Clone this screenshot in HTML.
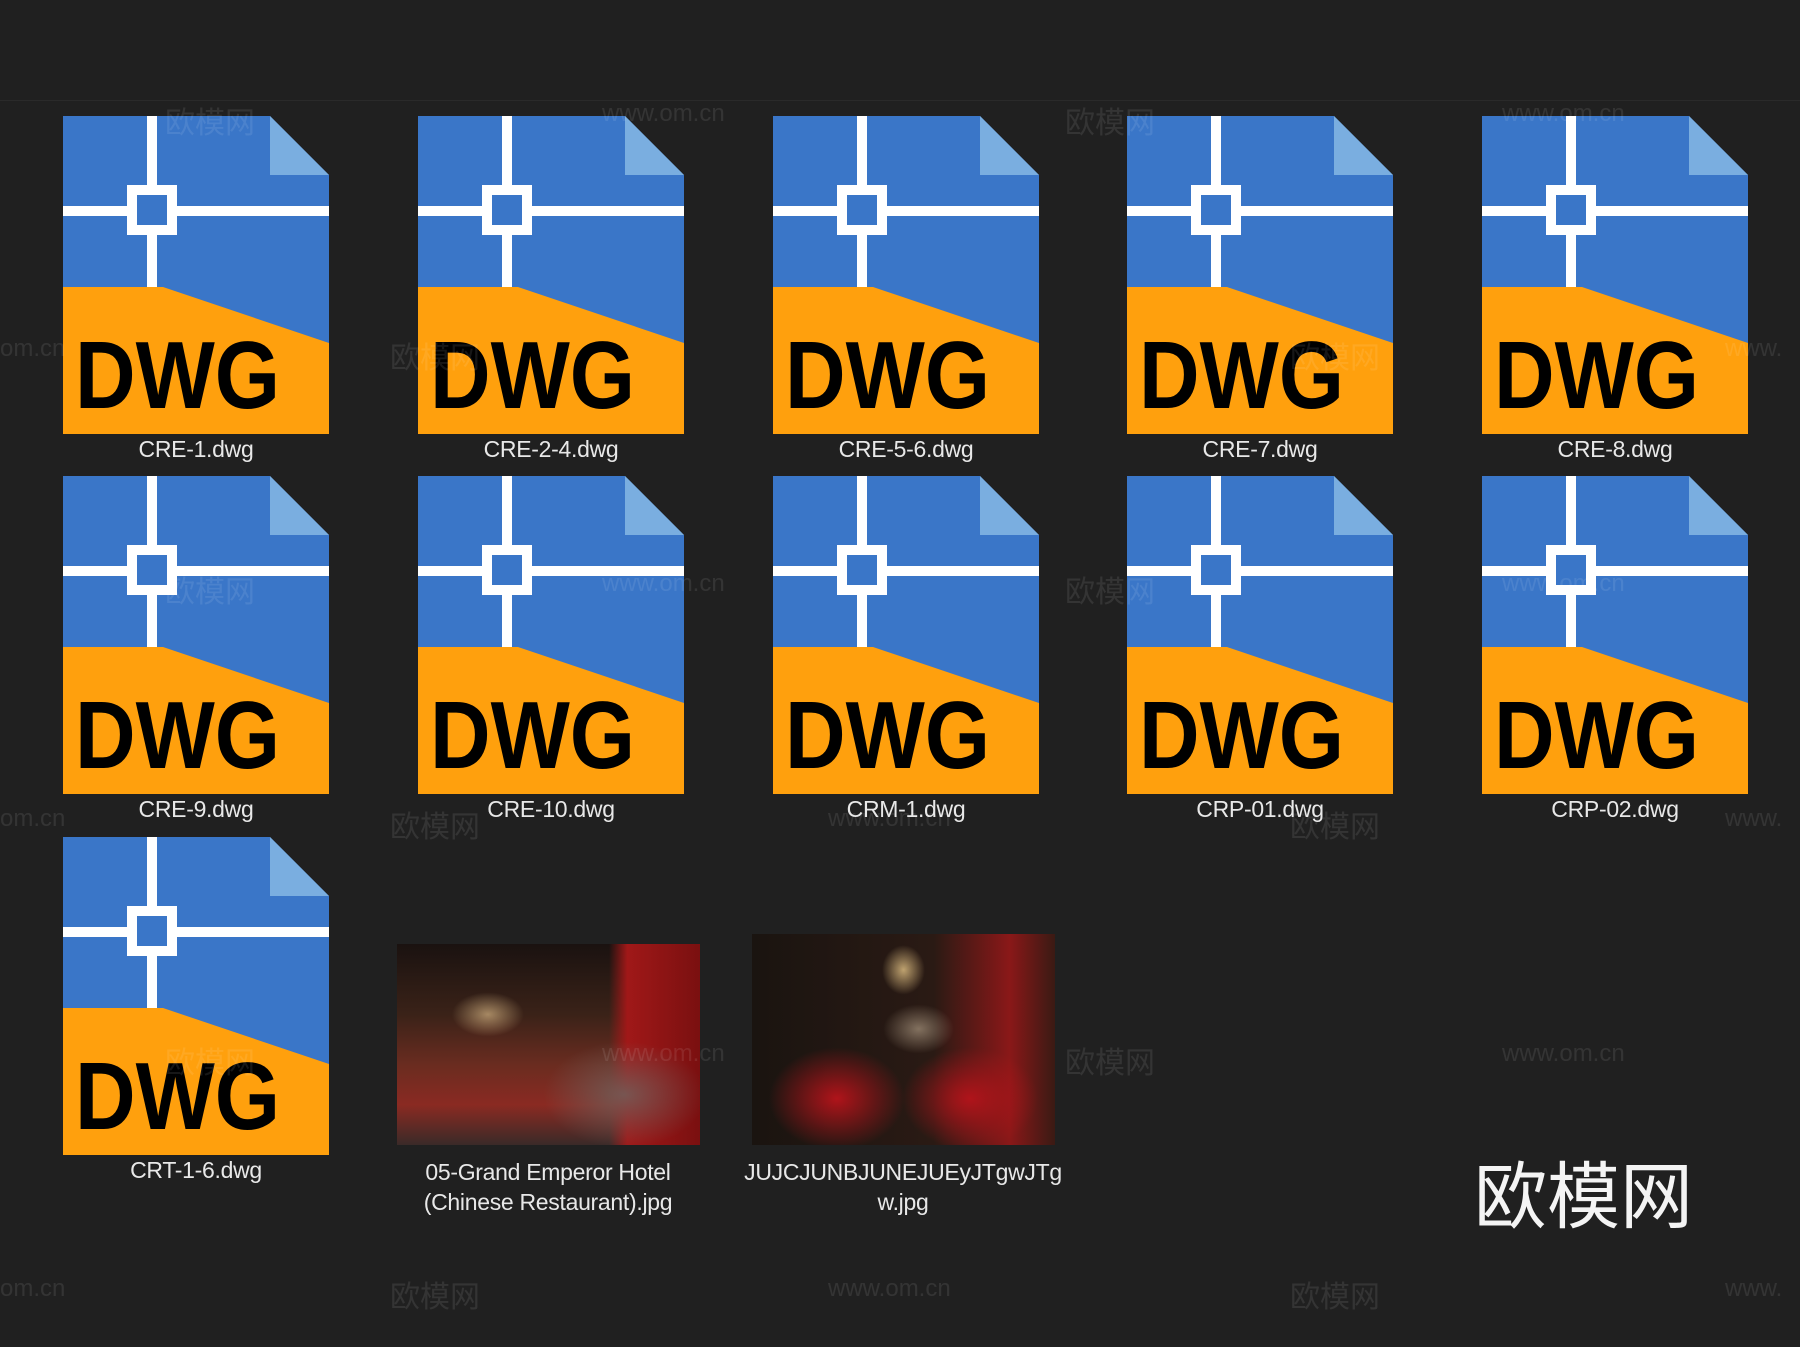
<!DOCTYPE html>
<html><head><meta charset="utf-8"><style>
body{margin:0;width:1800px;height:1347px;background:#202020;position:relative;overflow:hidden;font-family:"Liberation Sans","Noto Sans CJK SC",sans-serif}
.line{position:absolute;left:0;top:100px;width:1800px;height:1px;background:#2a2a2a}
.ic{position:absolute;width:266px;height:318px}
.lb{position:absolute;width:340px;text-align:center;color:#e8e8e8;font-size:23px;line-height:30px;letter-spacing:-0.3px}
.ph{position:absolute}
.wm{position:absolute;color:rgba(255,255,255,0.09);font-size:30px;white-space:nowrap}
.logo{position:absolute;left:1474px;top:1138px;font-family:"Noto Sans CJK SC",sans-serif;font-size:73px;color:#f4f4f4;font-weight:400}
</style></head><body>
<div class="line"></div>
<svg width="0" height="0" style="position:absolute"><defs>
<g id="ic">
<polygon points="0,0 207,0 266,59 266,318 0,318" fill="#3a76c8"/>
<polygon points="207,0 207,59 266,59" fill="#7aaee0"/>
<polygon points="0,171 100,171 266,227 266,318 0,318" fill="#ffa00d"/>
<rect x="84" y="0" width="10" height="171" fill="#fff"/>
<rect x="0" y="90" width="266" height="10" fill="#fff"/>
<rect x="69" y="74" width="40" height="40" fill="#3a76c8" stroke="#fff" stroke-width="10"/>
</g></defs></svg>

<div id="icons"></div>
<script>
var xs=[63,418,773,1127,1482],ys=[116,476,837];
var names=["CRE-1.dwg","CRE-2-4.dwg","CRE-5-6.dwg","CRE-7.dwg","CRE-8.dwg","CRE-9.dwg","CRE-10.dwg","CRM-1.dwg","CRP-01.dwg","CRP-02.dwg","CRT-1-6.dwg"];
var h="";
names.forEach(function(n,i){var x=xs[i%5],y=ys[Math.floor(i/5)];
h+='<svg class="ic" style="left:'+x+'px;top:'+y+'px" viewBox="0 0 266 318"><use href="#ic"/><text x="12" y="292" font-family="Liberation Sans,sans-serif" font-weight="bold" font-size="96" textLength="205" lengthAdjust="spacingAndGlyphs" fill="#000">DWG</text></svg>';
h+='<div class="lb" style="left:'+(x-37)+'px;top:'+(y+318)+'px">'+n+'</div>';});
document.getElementById('icons').innerHTML=h;
</script>

<div class="ph" style="left:397px;top:944px;width:303px;height:201px;background:
radial-gradient(ellipse at 30% 35%,rgba(255,220,160,.55) 0,rgba(0,0,0,0) 12%),
radial-gradient(ellipse at 75% 75%,rgba(110,100,95,.8) 0,rgba(0,0,0,0) 25%),
linear-gradient(90deg,rgba(0,0,0,0) 70%,#a01818 76%,#7a1010 100%),
linear-gradient(180deg,#1a1210 0,#3a2218 35%,#6a2c20 60%,#8a2a22 80%,#3a2a28 100%);"></div>
<div class="ph" style="left:752px;top:934px;width:303px;height:211px;background:
radial-gradient(ellipse at 50% 17%,rgba(255,220,150,.7) 0,rgba(0,0,0,0) 10%),
radial-gradient(ellipse at 55% 45%,rgba(220,200,170,.5) 0,rgba(0,0,0,0) 15%),
radial-gradient(ellipse at 28% 78%,#b0141a 0,rgba(0,0,0,0) 22%),
radial-gradient(ellipse at 72% 78%,#b0141a 0,rgba(0,0,0,0) 22%),
linear-gradient(90deg,#1a1410 0,#2a1a14 60%,#8a1818 85%,#3a1a14 100%);"></div>
<div class="lb" style="left:378px;top:1157px">05-Grand Emperor Hotel<br>(Chinese Restaurant).jpg</div>
<div class="lb" style="left:733px;top:1157px">JUJCJUNBJUNEJUEyJTgwJTg<br>w.jpg</div>

<div class="wm" style="left:165px;top:98px">欧模网</div>
<div class="wm" style="left:602px;top:100px;font-size:24px">www.om.cn</div>
<div class="wm" style="left:1065px;top:98px">欧模网</div>
<div class="wm" style="left:1502px;top:100px;font-size:24px">www.om.cn</div>
<div class="wm" style="left:0px;top:335px;font-size:24px">om.cn</div>
<div class="wm" style="left:390px;top:333px">欧模网</div>
<div class="wm" style="left:1290px;top:333px">欧模网</div>
<div class="wm" style="left:1725px;top:335px;font-size:24px">www.</div>
<div class="wm" style="left:165px;top:567px">欧模网</div>
<div class="wm" style="left:602px;top:570px;font-size:24px">www.om.cn</div>
<div class="wm" style="left:1065px;top:567px">欧模网</div>
<div class="wm" style="left:1502px;top:570px;font-size:24px">www.om.cn</div>
<div class="wm" style="left:0px;top:805px;font-size:24px">om.cn</div>
<div class="wm" style="left:390px;top:802px">欧模网</div>
<div class="wm" style="left:828px;top:805px;font-size:24px">www.om.cn</div>
<div class="wm" style="left:1290px;top:802px">欧模网</div>
<div class="wm" style="left:1725px;top:805px;font-size:24px">www.</div>
<div class="wm" style="left:165px;top:1038px">欧模网</div>
<div class="wm" style="left:602px;top:1040px;font-size:24px">www.om.cn</div>
<div class="wm" style="left:1065px;top:1038px">欧模网</div>
<div class="wm" style="left:1502px;top:1040px;font-size:24px">www.om.cn</div>
<div class="wm" style="left:0px;top:1275px;font-size:24px">om.cn</div>
<div class="wm" style="left:390px;top:1272px">欧模网</div>
<div class="wm" style="left:828px;top:1275px;font-size:24px">www.om.cn</div>
<div class="wm" style="left:1290px;top:1272px">欧模网</div>
<div class="wm" style="left:1725px;top:1275px;font-size:24px">www.</div>

<div class="logo">欧模网</div>
</body></html>
